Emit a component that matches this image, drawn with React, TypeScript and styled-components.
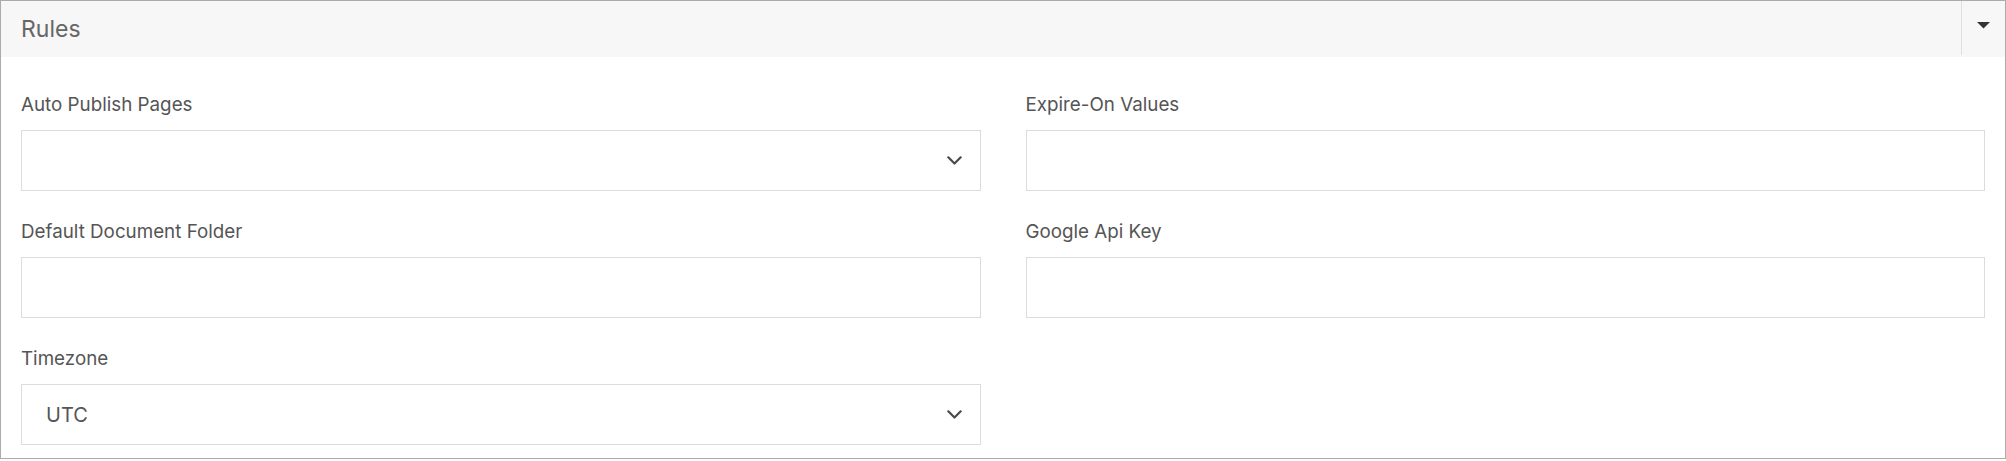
import React from "react";
import styled, { createGlobalStyle } from "styled-components";

const GlobalStyle = createGlobalStyle`
  html, body { margin: 0; padding: 0; background: #ffffff; }
  body { font-family: Inter, "Noto Sans", "Liberation Sans", sans-serif; }
  * { box-sizing: border-box; }
`;

const Panel = styled.section`
  width: 2006px;
  height: 459px;
  border: 1px solid #ababab;
  background: #ffffff;
  display: flex;
  flex-direction: column;
`;

const Header = styled.header`
  height: 56px;
  background: #f7f7f7;
  display: flex;
  align-items: stretch;
`;

const Title = styled.h2`
  flex: 1;
  margin: 0;
  padding-left: 20px;
  display: flex;
  align-items: center;
  font-size: 23px;
  font-weight: 400;
  color: #666666;
  letter-spacing: 0;
`;

const Toggle = styled.button`
  width: 44px;
  height: 54px;
  border: none;
  border-left: 1px solid #dedede;
  background: transparent;
  padding: 0 0 5px;
  display: flex;
  align-items: center;
  justify-content: center;
  cursor: pointer;
`;

const Body = styled.div`
  flex: 1;
  padding: 35px 20px 13px;
  display: grid;
  grid-template-columns: 1fr 1fr;
  column-gap: 45px;
  row-gap: 28px;
  align-content: start;
`;

const Field = styled.div`
  display: flex;
  flex-direction: column;
`;

const Label = styled.label`
  font-size: 18.8px;
  line-height: 26px;
  color: #555555;
  margin-bottom: 12px;
`;

const Box = styled.div`
  height: 61px;
  border: 1px solid #dcdcdc;
  background: #ffffff;
  display: flex;
  align-items: center;
  padding: 0 18px 0 24px;
`;

const Value = styled.span`
  flex: 1;
  font-size: 20px;
  color: #555555;
`;

const Chevron = () => (
  <svg width="15" height="9" viewBox="0 0 15 9" aria-hidden="true">
    <polyline
      points="1.3,1.3 7.5,7.5 13.7,1.3"
      fill="none"
      stroke="#4a4a4a"
      strokeWidth="2.2"
      strokeLinecap="round"
      strokeLinejoin="round"
    />
  </svg>
);

const Caret = () => (
  <svg width="13" height="7" viewBox="0 0 13 7" aria-hidden="true">
    <polygon points="0,0 13,0 6.5,6.5" fill="#333333" />
  </svg>
);

type FieldProps = { label: string; value?: string; select?: boolean };

const FormField = ({ label, value, select }: FieldProps) => (
  <Field>
    <Label>{label}</Label>
    <Box>
      <Value>{value}</Value>
      {select && <Chevron />}
    </Box>
  </Field>
);

export default function App() {
  return (
    <>
      <GlobalStyle />
      <Panel>
        <Header>
          <Title>Rules</Title>
          <Toggle aria-label="Toggle">
            <Caret />
          </Toggle>
        </Header>
        <Body>
          <FormField label="Auto Publish Pages" select />
          <FormField label="Expire-On Values" />
          <FormField label="Default Document Folder" />
          <FormField label="Google Api Key" />
          <FormField label="Timezone" value="UTC" select />
        </Body>
      </Panel>
    </>
  );
}
